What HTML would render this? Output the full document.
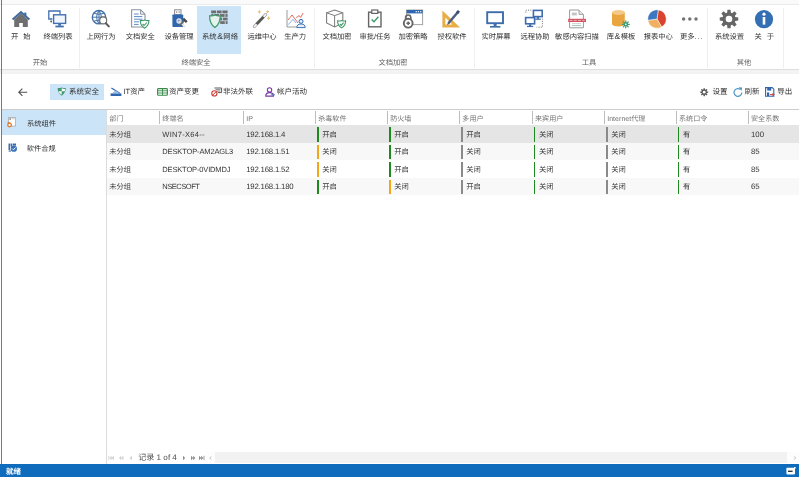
<!DOCTYPE html>
<html lang="zh-CN"><head><meta charset="utf-8"><title>系统安全</title>
<style>
html,body{margin:0;padding:0;}
body{width:799px;height:477px;overflow:hidden;background:#fff;position:relative;font-family:"Liberation Sans", sans-serif;font-size:8px;color:#3a3a3a;text-rendering:geometricPrecision;}
.a{position:absolute;white-space:nowrap;}
.c{position:absolute;white-space:nowrap;text-align:center;}
svg{position:absolute;display:block;overflow:visible;}
.rl{font-size:7.3px;line-height:10px;color:#303030;word-spacing:3px;}.amp{padding:0 0.5px;font-size:8.6px;line-height:1px;}
.gl{font-size:7.3px;line-height:10px;color:#606060;}
.tb{font-size:7.5px;line-height:10px;color:#303030;}
.th{font-size:7.1px;line-height:10px;color:#747474;}
.td{font-size:7.3px;line-height:10px;color:#363636;}
.bar{position:absolute;width:2px;}
#w{position:absolute;left:0;top:0;width:799px;height:477px;overflow:hidden;will-change:transform;}
</style></head><body><div id="w">
<div class="a" style="left:0;top:0;width:799px;height:69px;background:#fff;border-top:4px solid #fafafa;box-sizing:border-box;"></div>
<div class="a" style="left:0;top:4px;width:799px;height:1px;background:#ebebeb;"></div>
<div class="a" style="left:197px;top:6px;width:44px;height:48px;background:#cce4f7;"></div>
<div class="a" style="left:10.7px;top:10.8px;width:20px;height:18px;"><svg width="20" height="18" viewBox="0 0 20 18"><path d="M3.2 8.6 L10 2.6 L16.8 8.6 V16 H11.8 V12 H8.2 V16 H3.2 Z" fill="#6f6f6f"/><path d="M1.6 8.6 L10 1.2 L18.4 8.6" fill="none" stroke="#426a9c" stroke-width="2"/><rect x="13.2" y="1.6" width="2.2" height="3.8" fill="#426a9c"/></svg></div>
<div class="c rl" style="left:-9.3px;top:32px;width:60px;">开 始</div>
<div class="a" style="left:47px;top:10px;width:20px;height:18px;"><svg width="20" height="18" viewBox="0 0 20 18"><path d="M5.4 9 H1.8 V1 H13 V4" fill="none" stroke="#4270b0" stroke-width="1.3"/><rect x="6.6" y="4.8" width="12" height="8.6" fill="#f1f6fc" stroke="#4270b0" stroke-width="1.4"/><rect x="11.2" y="13.8" width="2.8" height="2" fill="#4270b0"/><rect x="8.4" y="15.6" width="8.4" height="1.8" fill="#4270b0"/><rect x="3.4" y="10.6" width="1.5" height="1.7" fill="#444"/></svg></div>
<div class="c rl" style="left:28px;top:32px;width:60px;">终端列表</div>
<div class="a" style="left:90.7px;top:9px;width:20px;height:20px;"><svg width="20" height="20" viewBox="0 0 20 20"><circle cx="8" cy="8.2" r="6.7" fill="#fff" stroke="#4573a8" stroke-width="1.4"/><path d="M8 1.5 V14.9 M1.3 8.2 H14.7 M2.8 4.3 Q8 6.3 13.2 4.3 M2.8 12.1 Q8 10.1 13.2 12.1 M8 1.5 Q3.2 8.2 8 14.9 M8 1.5 Q12.8 8.2 8 14.9" fill="none" stroke="#4573a8" stroke-width="1"/><circle cx="12.2" cy="11.4" r="3.5" fill="#fff" stroke="#6a6a6a" stroke-width="1.1"/><path d="M14.8 14.2 L17.8 17.4" stroke="#5a5a5a" stroke-width="2" stroke-linecap="round"/></svg></div>
<div class="c rl" style="left:71px;top:32px;width:60px;">上网行为</div>
<div class="a" style="left:130.3px;top:9px;width:20px;height:20px;"><svg width="20" height="20" viewBox="0 0 20 20"><path d="M1.6 0.8 H10.6 L15 5.2 V18 H1.6 Z" fill="#fff" stroke="#8a949e" stroke-width="1.1"/><path d="M10.6 0.8 V5.2 H15" fill="none" stroke="#8a949e" stroke-width="1"/><path d="M4 5 H8.6 M4 7.6 H12.4 M4 10.2 H12.4 M4 12.8 H9 M4 15.4 H8.6" stroke="#5b8ac6" stroke-width="1"/><path d="M14.6 11 Q16.6 11.9 18.9 11.6 Q19 16.6 14.6 19.2 Q10.2 16.6 10.3 11.6 Q12.6 11.9 14.6 11 Z" fill="#fff" stroke="#3f9a6a" stroke-width="1.1"/><path d="M12.6 15 L14.1 16.5 L16.8 13.5" fill="none" stroke="#3f9a6a" stroke-width="1.1"/></svg></div>
<div class="c rl" style="left:110.3px;top:32px;width:60px;">文档安全</div>
<div class="a" style="left:170.2px;top:9px;width:20px;height:20px;"><svg width="20" height="20" viewBox="0 0 20 20"><rect x="4.6" y="0.8" width="6.4" height="4.8" fill="#fff" stroke="#8a8a8a" stroke-width="1"/><rect x="6" y="2.4" width="1.2" height="1.4" fill="#8a8a8a"/><rect x="8.6" y="2.4" width="1.2" height="1.4" fill="#8a8a8a"/><rect x="2.4" y="5.4" width="10.8" height="12.6" rx="0.8" fill="#2f66b0"/><path d="M9 12.2 L14.6 17.6" stroke="#e4e4e4" stroke-width="1.7" stroke-linecap="round"/><circle cx="9" cy="12" r="2" fill="none" stroke="#e4e4e4" stroke-width="1.3"/><path d="M8.6 17.4 L14.6 11.4" stroke="#666" stroke-width="1.5"/><path d="M13.2 9.6 L16.8 13.2" stroke="#4a4a4a" stroke-width="2.4"/></svg></div>
<div class="c rl" style="left:149px;top:32px;width:60px;">设备管理</div>
<div class="a" style="left:209.3px;top:9px;width:20px;height:20px;"><svg width="20" height="20" viewBox="0 0 20 20"><g fill="#6e6e6e"><rect x="2.2" y="1.50" width="4.8" height="2.8"/><rect x="7.8" y="1.50" width="4.8" height="2.8"/><rect x="13.4" y="1.50" width="5.2" height="2.8"/><rect x="2.2" y="5.05" width="2.2" height="2.8"/><rect x="5.2" y="5.05" width="4.8" height="2.8"/><rect x="10.8" y="5.05" width="4.8" height="2.8"/><rect x="16.4" y="5.05" width="2.2" height="2.8"/><rect x="10.6" y="8.60" width="2.4" height="2.8"/><rect x="13.8" y="8.60" width="4.8" height="2.8"/><rect x="11.2" y="12.15" width="4.6" height="2.8"/><rect x="16.6" y="12.15" width="2.0" height="2.8"/></g><path d="M5.9 6 Q8.2 7.2 11.2 6.8 Q11.4 14.6 5.9 18.6 Q0.4 14.6 0.6 6.8 Q3.6 7.2 5.9 6 Z" fill="#e6f2ec" stroke="#3f9a6a" stroke-width="1.2"/></svg></div>
<div class="c rl" style="left:190px;top:32px;width:60px;">系统<span class="amp">&amp;</span>网络</div>
<div class="a" style="left:252px;top:9px;width:20px;height:20px;"><svg width="20" height="20" viewBox="0 0 20 20"><path d="M2.4 17.6 L13.6 5.6" stroke="#8a8a8a" stroke-width="3" stroke-linecap="round"/><path d="M2.4 17.6 L13.6 5.6" stroke="#f4f4f4" stroke-width="1.9" stroke-linecap="round"/><path d="M4.6 15.2 L11.6 7.8" stroke="#555" stroke-width="2.6"/><g stroke="#e8b868" stroke-width="0.9" stroke-linecap="round"><path d="M7.4 1.6 V4.2 M6.1 2.9 H8.7"/><path d="M15.6 1.6 V3.6 M14.6 2.6 H16.6"/><path d="M16.6 8 V10.4 M15.4 9.2 H17.8"/></g></svg></div>
<div class="c rl" style="left:232px;top:32px;width:60px;">运维中心</div>
<div class="a" style="left:284.5px;top:9px;width:22px;height:20px;"><svg width="22" height="20" viewBox="0 0 22 20"><path d="M2 1 V18 H12.6" fill="none" stroke="#8e8e8e" stroke-width="0.9"/><path d="M3 11 L7 6 L13 14" fill="none" stroke="#dc5a4e" stroke-width="0.9"/><path d="M11.2 8.6 L14.2 6.6 L15.6 8.4 L18.2 4" fill="none" stroke="#dc5a4e" stroke-width="0.9"/><path d="M3 15.8 L8 10.4 L11 14" fill="none" stroke="#6aa0d8" stroke-width="0.8"/><circle cx="16" cy="12.4" r="2" fill="#e6eff9" stroke="#2f66b0" stroke-width="1"/><path d="M11.8 18.6 Q11.8 15 16 15 Q20.2 15 20.2 18.6 Z" fill="#e6eff9" stroke="#3c74b8" stroke-width="1"/></svg></div>
<div class="c rl" style="left:265.2px;top:32px;width:60px;">生产力</div>
<div class="a" style="left:326px;top:9px;width:22px;height:20px;"><svg width="22" height="20" viewBox="0 0 22 20"><path d="M8.6 1 L16.8 3.8 V14 L8.6 18 L0.6 14 V3.8 Z" fill="#fff" stroke="#7d7d7d" stroke-width="1.1"/><path d="M0.6 3.8 L8.6 6.6 L16.8 3.8 M8.6 6.6 V18" fill="none" stroke="#7d7d7d" stroke-width="1"/><path d="M15.6 11.4 Q17.4 12.2 19.6 11.9 Q19.7 16.4 15.6 18.9 Q11.5 16.4 11.6 11.9 Q13.8 12.2 15.6 11.4 Z" fill="#fff" stroke="#3f9a6a" stroke-width="1.1"/><path d="M13.8 15 L15.2 16.4 L17.6 13.7" fill="none" stroke="#3f9a6a" stroke-width="1.1"/></svg></div>
<div class="c rl" style="left:307px;top:32px;width:60px;">文档加密</div>
<div class="a" style="left:366px;top:9px;width:18px;height:20px;"><svg width="18" height="20" viewBox="0 0 18 20"><rect x="2.6" y="3.2" width="12.4" height="14.6" fill="#fff" stroke="#646464" stroke-width="1.4"/><rect x="5.8" y="1" width="6" height="3.4" fill="#fff" stroke="#646464" stroke-width="1.2"/><path d="M5.6 10.4 L8 12.8 L12.4 7.8" fill="none" stroke="#3f9a6a" stroke-width="1.4"/></svg></div>
<div class="c rl" style="left:345px;top:32px;width:60px;">审批/任务</div>
<div class="a" style="left:402px;top:9px;width:22px;height:20px;"><svg width="22" height="20" viewBox="0 0 22 20"><rect x="4.6" y="1" width="16" height="14.6" fill="#fff" stroke="#a4a4a4" stroke-width="1"/><rect x="4.6" y="1" width="16" height="3.4" fill="#2f66b0"/><g fill="#fff"><rect x="13.6" y="2.2" width="1.3" height="1.1"/><rect x="15.8" y="2.2" width="1.3" height="1.1"/><rect x="18" y="2.2" width="1.3" height="1.1"/></g><path d="M3.6 11 V8.6 a2.6 2.6 0 0 1 5.2 0 V11" fill="none" stroke="#666" stroke-width="1.6"/><circle cx="6.2" cy="14.2" r="4.4" fill="#fff" stroke="#666" stroke-width="1.9"/><path d="M6.2 12.4 V16 M4.4 14.2 H8" stroke="#666" stroke-width="1.5"/></svg></div>
<div class="c rl" style="left:383px;top:32px;width:60px;">加密策略</div>
<div class="a" style="left:441px;top:9px;width:20px;height:20px;"><svg width="20" height="20" viewBox="0 0 20 20"><path d="M1.4 1.6 L19 18.4 H1.4 Z" fill="#e8ae48"/><path d="M4.4 8.6 L11.2 15.4 H4.4 Z" fill="#fff"/><path d="M7.4 14.2 L17 3" stroke="#4a5f86" stroke-width="2.5"/><path d="M16 4.2 L18 1.8" stroke="#3b4a66" stroke-width="2.7"/><path d="M6 16 L7 13.4 L8.6 14.8 Z" fill="#555"/></svg></div>
<div class="c rl" style="left:422px;top:32px;width:60px;">授权软件</div>
<div class="a" style="left:486px;top:9px;width:20px;height:20px;"><svg width="20" height="20" viewBox="0 0 20 20"><rect x="1.2" y="3.2" width="15.8" height="11" fill="#fff" stroke="#3f6cab" stroke-width="1.9"/><rect x="7.6" y="15" width="3" height="2.2" fill="#3f6cab"/><rect x="4" y="17" width="10.4" height="1.6" fill="#3f6cab"/></svg></div>
<div class="c rl" style="left:466px;top:32px;width:60px;">实时屏幕</div>
<div class="a" style="left:523.2px;top:9px;width:22px;height:20px;"><svg width="22" height="20" viewBox="0 0 22 20"><path d="M2.8 3.6 V1.2 H8.6" fill="none" stroke="#666" stroke-width="0.9" stroke-dasharray="1 1.3"/><path d="M19.4 9.6 V18.2 H13.6" fill="none" stroke="#666" stroke-width="0.9" stroke-dasharray="1 1.3"/><rect x="10.4" y="1.4" width="8.8" height="6.2" fill="#fff" stroke="#3f6cab" stroke-width="1.6"/><rect x="13.8" y="8" width="2.2" height="1.8" fill="#3f6cab"/><rect x="12.2" y="9.6" width="5.6" height="1.2" fill="#3f6cab"/><rect x="2.6" y="8.6" width="9" height="6.2" fill="#fff" stroke="#3f6cab" stroke-width="1.6"/><rect x="6" y="15.2" width="2.2" height="1.8" fill="#3f6cab"/><rect x="4" y="16.8" width="6.2" height="1.3" fill="#3f6cab"/></svg></div>
<div class="c rl" style="left:505px;top:32px;width:60px;">远程协助</div>
<div class="a" style="left:566px;top:9px;width:22px;height:20px;"><svg width="22" height="20" viewBox="0 0 22 20"><path d="M3.6 1 H13 L17.4 5.4 V18.8 H3.6 Z" fill="#fff" stroke="#9a9a9a" stroke-width="1"/><path d="M13 1 V5.4 H17.4" fill="#ececec" stroke="#9a9a9a" stroke-width="0.9"/><rect x="5.8" y="3.6" width="5" height="2.8" fill="#c4c4c4"/><path d="M6 14.6 H15.2" stroke="#c8c8c8" stroke-width="0.9"/><path d="M6 16.6 H15.2" stroke="#9ccbb0" stroke-width="1"/><rect x="2.2" y="9.8" width="17.8" height="3.2" fill="#d4525e"/><path d="M3.6 11.4 H18.6" stroke="#f6d4d8" stroke-width="0.7" stroke-dasharray="3 1.2"/></svg></div>
<div class="c rl" style="left:547px;top:32px;width:60px;">敏感内容扫描</div>
<div class="a" style="left:611px;top:9px;width:20px;height:20px;"><svg width="20" height="20" viewBox="0 0 20 20"><path d="M1 3.6 V15 a6.4 2.5 0 0 0 12.8 0 V3.6 Z" fill="#e9a640"/><ellipse cx="7.4" cy="3.6" rx="6.4" ry="2.5" fill="#f3c985"/><g stroke="#3a9a70" stroke-width="1.2" stroke-linecap="round"><path d="M14.8 11.8 V18.8 M11.3 15.3 H18.3 M12.3 12.8 L17.3 17.8 M17.3 12.8 L12.3 17.8"/></g><circle cx="14.8" cy="15.3" r="2" fill="#3a9a70"/><circle cx="14.8" cy="15.3" r="0.9" fill="#fff"/></svg></div>
<div class="c rl" style="left:591px;top:32px;width:60px;">库<span class="amp">&amp;</span>模板</div>
<div class="a" style="left:647.1px;top:9px;width:20px;height:20px;"><svg width="20" height="20" viewBox="0 0 20 20"><path d="M10 10 L11.28 0.89 A9.2 9.2 0 0 1 14.60 17.97 Z" fill="#d8442e" stroke="#fff" stroke-width="0.5"/><path d="M10 10 L14.60 17.97 A9.2 9.2 0 0 1 0.89 11.28 Z" fill="#f0b060" stroke="#fff" stroke-width="0.5"/><path d="M10 10 L0.89 11.28 A9.2 9.2 0 0 1 11.28 0.89 Z" fill="#3b78c0" stroke="#fff" stroke-width="0.5"/></svg></div>
<div class="c rl" style="left:628.3px;top:32px;width:60px;">报表中心</div>
<div class="a" style="left:680.2px;top:15px;width:20px;height:8px;"><svg width="20" height="8" viewBox="0 0 20 8"><circle cx="3.6" cy="4" r="1.75" fill="#747474"/><circle cx="9.8" cy="4" r="1.75" fill="#747474"/><circle cx="16" cy="4" r="1.75" fill="#747474"/></svg></div>
<div class="c rl" style="left:661.5px;top:32px;width:60px;">更多<span style="letter-spacing:0.8px">...</span></div>
<div class="a" style="left:718.5px;top:9px;width:20px;height:20px;"><svg width="20" height="20" viewBox="0 0 20 20"><path d="M19.27 8.46 L19.27 11.54 L16.32 11.91 L15.82 13.12 L17.65 15.47 L15.47 17.65 L13.12 15.82 L11.91 16.32 L11.54 19.27 L8.46 19.27 L8.09 16.32 L6.88 15.82 L4.53 17.65 L2.35 15.47 L4.18 13.12 L3.68 11.91 L0.73 11.54 L0.73 8.46 L3.68 8.09 L4.18 6.88 L2.35 4.53 L4.53 2.35 L6.88 4.18 L8.09 3.68 L8.46 0.73 L11.54 0.73 L11.91 3.68 L13.12 4.18 L15.47 2.35 L17.65 4.53 L15.82 6.88 L16.32 8.09 Z" fill="#666"/><circle cx="10" cy="10" r="3.3" fill="#fff"/></svg></div>
<div class="c rl" style="left:699.5px;top:32px;width:60px;">系统设置</div>
<div class="a" style="left:753.9px;top:9px;width:20px;height:20px;"><svg width="20" height="20" viewBox="0 0 20 20"><circle cx="10" cy="10.2" r="9.1" fill="#336fb3"/><rect x="8.7" y="8" width="2.6" height="7.6" fill="#fff"/><circle cx="10" cy="5.2" r="1.6" fill="#fff"/></svg></div>
<div class="c rl" style="left:734.2px;top:32px;width:60px;">关 于</div>
<div class="a" style="left:78.5px;top:8px;width:1px;height:60px;background:#efefef;"></div>
<div class="a" style="left:314px;top:8px;width:1px;height:60px;background:#efefef;"></div>
<div class="a" style="left:473.5px;top:8px;width:1px;height:60px;background:#efefef;"></div>
<div class="a" style="left:706.6px;top:8px;width:1px;height:60px;background:#efefef;"></div>
<div class="a" style="left:783px;top:8px;width:1px;height:60px;background:#efefef;"></div>
<div class="c gl" style="left:10px;top:57.5px;width:60px;">开始</div>
<div class="c gl" style="left:166px;top:57.5px;width:60px;">终端安全</div>
<div class="c gl" style="left:363px;top:57.5px;width:60px;">文档加密</div>
<div class="c gl" style="left:559px;top:57.5px;width:60px;">工具</div>
<div class="c gl" style="left:714px;top:57.5px;width:60px;">其他</div>
<div class="a" style="left:0;top:69px;width:799px;height:5px;background:#f3f3f3;"></div>
<div class="a" style="left:0;top:69px;width:799px;height:1px;background:#dedede;"></div>
<div class="a" style="left:18.2px;top:87.6px;width:9.4px;height:8.4px;"><svg width="9.4" height="8.4" viewBox="0 0 9.4 8.4"><path d="M9.2 4.2 H1.2 M4.4 0.6 L0.8 4.2 L4.4 7.8" fill="none" stroke="#505050" stroke-width="1.1"/></svg></div>
<div class="a" style="left:50px;top:84px;width:53.8px;height:15.5px;background:#cce4f7;"></div>
<div class="a" style="left:56.6px;top:87.3px;width:9px;height:11px;"><svg width="9.4" height="9" viewBox="0 0 10 10"><path d="M5 0.5 Q7 1.4 9.5 1.2 Q9.7 6.6 5 9.6 Q0.3 6.6 0.5 1.2 Q3 1.4 5 0.5 Z" fill="#3f9a72"/><path d="M5 1.5 V4.8 H8.5 Q8.7 3.4 8.6 2.1 Q6.6 2.2 5 1.5 Z" fill="#fff"/><path d="M5 8.5 V4.8 H1.5 Q2.1 7 5 8.5 Z" fill="#fff"/></svg></div>
<div class="a tb" style="left:69px;top:87.2px;">系统安全</div>
<div class="a" style="left:110px;top:86.8px;width:12px;height:11px;"><svg width="12" height="10" viewBox="0 0 12 10"><path d="M1.4 1 L9.6 6" stroke="#2f66b0" stroke-width="1.2"/><path d="M0.6 6.4 H11.4 V9 H0.6 Z" fill="#2f66b0"/><path d="M2.4 6 L5.4 3.6 L9.6 6" fill="#9dbde6"/></svg></div>
<div class="a tb" style="left:123.4px;top:87.2px;">IT资产</div>
<div class="a" style="left:156.8px;top:87.6px;width:11px;height:11px;"><svg width="11" height="8" viewBox="0 0 11 8"><rect x="0.6" y="0.6" width="9.8" height="6.6" rx="0.8" fill="#fff" stroke="#3a8a4a" stroke-width="1.1"/><path d="M5.5 0.6 V7.2 M0.6 2.8 H10.4 M0.6 5 H10.4" stroke="#3a8a4a" stroke-width="0.9"/></svg></div>
<div class="a tb" style="left:169px;top:87.2px;">资产变更</div>
<div class="a" style="left:211.4px;top:87.2px;width:12px;height:11px;"><svg width="12" height="10" viewBox="0 0 12 10"><path d="M3.4 1 H10.6 V5.6 H7" fill="none" stroke="#5a5a5a" stroke-width="1"/><path d="M4.6 2.6 H9.4 M5.6 4.1 H9.4" stroke="#666" stroke-width="0.8"/><circle cx="3.4" cy="6.4" r="2.6" fill="#fff" stroke="#d0392e" stroke-width="1.1"/><path d="M1.6 8.2 L5.2 4.6" stroke="#d0392e" stroke-width="1"/></svg></div>
<div class="a tb" style="left:223px;top:87.2px;">非法外联</div>
<div class="a" style="left:265.2px;top:87px;width:10px;height:11px;"><svg width="10" height="10" viewBox="0 0 11 11"><circle cx="5" cy="3.2" r="2.4" fill="#fff" stroke="#7a3aa8" stroke-width="1.2"/><path d="M0.8 10 Q0.8 6.2 5 6.2 Q9.2 6.2 9.2 10 Z" fill="#fff" stroke="#7a3aa8" stroke-width="1.2"/><path d="M6.4 8.6 H10.4 M8.8 7.2 L10.4 8.6 L8.8 10" stroke="#3c74b8" stroke-width="0.9" fill="none"/></svg></div>
<div class="a tb" style="left:277px;top:87.2px;">帐户活动</div>
<div class="a" style="left:700.2px;top:87.5px;width:8.4px;height:11px;"><svg width="8.4" height="8.4" viewBox="0 0 20 20"><path d="M19.47 8.42 L19.47 11.58 L16.13 11.85 L15.64 13.02 L17.81 15.58 L15.58 17.81 L13.02 15.64 L11.85 16.13 L11.58 19.47 L8.42 19.47 L8.15 16.13 L6.98 15.64 L4.42 17.81 L2.19 15.58 L4.36 13.02 L3.87 11.85 L0.53 11.58 L0.53 8.42 L3.87 8.15 L4.36 6.98 L2.19 4.42 L4.42 2.19 L6.98 4.36 L8.15 3.87 L8.42 0.53 L11.58 0.53 L11.85 3.87 L13.02 4.36 L15.58 2.19 L17.81 4.42 L15.64 6.98 L16.13 8.15 Z" fill="#555"/><circle cx="10" cy="10" r="3.4" fill="#fff"/></svg></div>
<div class="a tb" style="left:712.4px;top:87.2px;">设置</div>
<div class="a" style="left:733px;top:87px;width:10px;height:11px;"><svg width="10" height="10" viewBox="0 0 10 10"><path d="M8.8 5.6 A3.9 3.9 0 1 1 7 2.2" fill="none" stroke="#4f97c4" stroke-width="1.2"/><path d="M5.6 0.3 L9.2 0.6 L8.4 4 Z" fill="#4f97c4"/></svg></div>
<div class="a tb" style="left:744.6px;top:87.2px;">刷新</div>
<div class="a" style="left:765px;top:87.2px;width:11px;height:11px;"><svg width="11" height="10" viewBox="0 0 11 10"><path d="M0.6 0.6 H7.2 L8.8 2.2 V9.2 H0.6 Z" fill="#fff" stroke="#2f66b0" stroke-width="1.1"/><rect x="2.2" y="0.8" width="4" height="2.8" fill="#2f66b0"/><rect x="2" y="5.4" width="2.2" height="3.6" fill="#2f66b0"/><path d="M5 7.6 L9 7.6 M7.6 6.2 L9 7.6 L7.6 9" stroke="#d0392e" stroke-width="1" fill="none"/></svg></div>
<div class="a tb" style="left:777.3px;top:87.2px;">导出</div>
<div class="a" style="left:2px;top:110px;width:104.6px;height:24.7px;background:#cce4f7;"></div>
<div class="a" style="left:106px;top:110px;width:1px;height:354px;background:#dcdcdc;"></div>
<div class="a" style="left:7.4px;top:116.8px;width:9px;height:11px;"><svg width="9" height="11" viewBox="0 0 9 11"><rect x="1.6" y="0.5" width="6.8" height="8.6" fill="#fff" stroke="#b0b0b0" stroke-width="0.9"/><rect x="2.4" y="1.2" width="1.6" height="1.6" fill="#888"/><rect x="5" y="1.4" width="2.6" height="0.8" fill="#bbb"/><circle cx="2.6" cy="8" r="1.8" fill="#fff" stroke="#e07a30" stroke-width="1.3"/><rect x="0.6" y="5" width="2.2" height="1.3" fill="#e07a30"/></svg></div>
<div class="a tb" style="left:27px;top:118.6px;font-size:7.25px;">系统组件</div>
<div class="a" style="left:7.8px;top:143.4px;width:9.4px;height:9px;"><svg width="9.4" height="9" viewBox="0 0 11 10.5"><rect x="0.6" y="0.6" width="1.7" height="7.6" fill="#3a68a8"/><rect x="3" y="0.6" width="1.7" height="3.6" fill="#3a68a8"/><rect x="5.4" y="0.6" width="4" height="2.4" fill="#3a68a8"/><path d="M0.8 9.4 H3.4" stroke="#3a68a8" stroke-width="1.4"/><circle cx="6.8" cy="6.6" r="3.7" fill="#3c74b8"/><path d="M5 6.6 L6.4 8 L8.8 5.2" stroke="#fff" stroke-width="1.1" fill="none"/></svg></div>
<div class="a tb" style="left:26.8px;top:143.8px;font-size:7.25px;">软件合规</div>
<div class="a" style="left:2px;top:109px;width:797px;height:1px;background:#cdcdcd;"></div>
<div class="a" style="left:107px;top:124.6px;width:692px;height:1px;background:#dcdcdc;"></div>
<div class="a th" style="left:109.2px;top:113.8px;">部门</div>
<div class="a th" style="left:162.3px;top:113.8px;">终端名</div>
<div class="a th" style="left:246.2px;top:113.8px;">IP</div>
<div class="a th" style="left:318.2px;top:113.8px;">杀毒软件</div>
<div class="a th" style="left:390.2px;top:113.8px;">防火墙</div>
<div class="a th" style="left:462.3px;top:113.8px;">多用户</div>
<div class="a th" style="left:535px;top:113.8px;">来宾用户</div>
<div class="a th" style="left:607.2px;top:113.8px;">Internet代理</div>
<div class="a th" style="left:679px;top:113.8px;">系统口令</div>
<div class="a th" style="left:751px;top:113.8px;">安全系数</div>
<div class="a" style="left:159px;top:110.8px;width:1px;height:13.4px;background:#bdbdbd;"></div>
<div class="a" style="left:242.9px;top:110.8px;width:1px;height:13.4px;background:#bdbdbd;"></div>
<div class="a" style="left:314.9px;top:110.8px;width:1px;height:13.4px;background:#bdbdbd;"></div>
<div class="a" style="left:386.9px;top:110.8px;width:1px;height:13.4px;background:#bdbdbd;"></div>
<div class="a" style="left:459px;top:110.8px;width:1px;height:13.4px;background:#bdbdbd;"></div>
<div class="a" style="left:531.7px;top:110.8px;width:1px;height:13.4px;background:#bdbdbd;"></div>
<div class="a" style="left:603.9px;top:110.8px;width:1px;height:13.4px;background:#bdbdbd;"></div>
<div class="a" style="left:675.7px;top:110.8px;width:1px;height:13.4px;background:#bdbdbd;"></div>
<div class="a" style="left:747.7px;top:110.8px;width:1px;height:13.4px;background:#bdbdbd;"></div>
<div class="a" style="left:107px;top:125.2px;width:692px;height:17.5px;background:#e5e5e5;"></div>
<div class="a td" style="left:109.2px;top:129.8px;">未分组</div>
<div class="a td" style="left:162.3px;top:129.8px;font-size:7.5px;letter-spacing:0.29px;">WIN7-X64--</div>
<div class="a td" style="left:246.2px;top:129.8px;font-size:7.8px;letter-spacing:-0.2px;">192.168.1.4</div>
<div class="bar" style="left:317.3px;top:127.1px;height:14.6px;width:1.4px;background:#1e8a1e;"></div>
<div class="a td" style="left:322.2px;top:129.8px;">开启</div>
<div class="bar" style="left:389.3px;top:127.1px;height:14.6px;width:1.4px;background:#1e8a1e;"></div>
<div class="a td" style="left:394.2px;top:129.8px;">开启</div>
<div class="bar" style="left:461.4px;top:127.1px;height:14.6px;width:1.4px;background:#8a8a8a;"></div>
<div class="a td" style="left:466.3px;top:129.8px;">开启</div>
<div class="bar" style="left:534.1px;top:127.1px;height:14.6px;width:1.4px;background:#1e8a1e;"></div>
<div class="a td" style="left:539px;top:129.8px;">关闭</div>
<div class="bar" style="left:606.3px;top:127.1px;height:14.6px;width:1.4px;background:#8a8a8a;"></div>
<div class="a td" style="left:611.2px;top:129.8px;">关闭</div>
<div class="bar" style="left:678.1px;top:127.1px;height:14.6px;width:1.4px;background:#1e8a1e;"></div>
<div class="a td" style="left:683px;top:129.8px;">有</div>
<div class="a td" style="left:751px;top:129.8px;font-size:7.8px;">100</div>
<div class="a" style="left:107px;top:142.7px;width:692px;height:17.5px;background:#f8f8f8;"></div>
<div class="a td" style="left:109.2px;top:147.3px;">未分组</div>
<div class="a td" style="left:162.3px;top:147.3px;font-size:7.5px;letter-spacing:-0.13px;">DESKTOP-AM2AGL3</div>
<div class="a td" style="left:246.2px;top:147.3px;font-size:7.8px;letter-spacing:-0.2px;">192.168.1.51</div>
<div class="bar" style="left:317.3px;top:144.6px;height:14.6px;width:1.4px;background:#f0a818;"></div>
<div class="a td" style="left:322.2px;top:147.3px;">关闭</div>
<div class="bar" style="left:389.3px;top:144.6px;height:14.6px;width:1.4px;background:#1e8a1e;"></div>
<div class="a td" style="left:394.2px;top:147.3px;">开启</div>
<div class="bar" style="left:461.4px;top:144.6px;height:14.6px;width:1.4px;background:#8a8a8a;"></div>
<div class="a td" style="left:466.3px;top:147.3px;">关闭</div>
<div class="bar" style="left:534.1px;top:144.6px;height:14.6px;width:1.4px;background:#1e8a1e;"></div>
<div class="a td" style="left:539px;top:147.3px;">关闭</div>
<div class="bar" style="left:606.3px;top:144.6px;height:14.6px;width:1.4px;background:#8a8a8a;"></div>
<div class="a td" style="left:611.2px;top:147.3px;">关闭</div>
<div class="bar" style="left:678.1px;top:144.6px;height:14.6px;width:1.4px;background:#1e8a1e;"></div>
<div class="a td" style="left:683px;top:147.3px;">有</div>
<div class="a td" style="left:751px;top:147.3px;font-size:7.8px;">85</div>
<div class="a" style="left:107px;top:160.2px;width:692px;height:17.5px;background:#ffffff;"></div>
<div class="a td" style="left:109.2px;top:164.8px;">未分组</div>
<div class="a td" style="left:162.3px;top:164.8px;font-size:7.5px;letter-spacing:-0.15px;">DESKTOP-0VIDMDJ</div>
<div class="a td" style="left:246.2px;top:164.8px;font-size:7.8px;letter-spacing:-0.2px;">192.168.1.52</div>
<div class="bar" style="left:317.3px;top:162.1px;height:14.6px;width:1.4px;background:#f0a818;"></div>
<div class="a td" style="left:322.2px;top:164.8px;">关闭</div>
<div class="bar" style="left:389.3px;top:162.1px;height:14.6px;width:1.4px;background:#1e8a1e;"></div>
<div class="a td" style="left:394.2px;top:164.8px;">开启</div>
<div class="bar" style="left:461.4px;top:162.1px;height:14.6px;width:1.4px;background:#8a8a8a;"></div>
<div class="a td" style="left:466.3px;top:164.8px;">关闭</div>
<div class="bar" style="left:534.1px;top:162.1px;height:14.6px;width:1.4px;background:#1e8a1e;"></div>
<div class="a td" style="left:539px;top:164.8px;">关闭</div>
<div class="bar" style="left:606.3px;top:162.1px;height:14.6px;width:1.4px;background:#8a8a8a;"></div>
<div class="a td" style="left:611.2px;top:164.8px;">关闭</div>
<div class="bar" style="left:678.1px;top:162.1px;height:14.6px;width:1.4px;background:#1e8a1e;"></div>
<div class="a td" style="left:683px;top:164.8px;">有</div>
<div class="a td" style="left:751px;top:164.8px;font-size:7.8px;">85</div>
<div class="a" style="left:107px;top:177.7px;width:692px;height:17.5px;background:#f8f8f8;"></div>
<div class="a td" style="left:109.2px;top:182.3px;">未分组</div>
<div class="a td" style="left:162.3px;top:182.3px;font-size:7.5px;letter-spacing:-0.46px;">NSECSOFT</div>
<div class="a td" style="left:246.2px;top:182.3px;font-size:7.8px;letter-spacing:-0.2px;">192.168.1.180</div>
<div class="bar" style="left:317.3px;top:179.6px;height:14.6px;width:1.4px;background:#1e8a1e;"></div>
<div class="a td" style="left:322.2px;top:182.3px;">开启</div>
<div class="bar" style="left:389.3px;top:179.6px;height:14.6px;width:1.4px;background:#f0a818;"></div>
<div class="a td" style="left:394.2px;top:182.3px;">关闭</div>
<div class="bar" style="left:461.4px;top:179.6px;height:14.6px;width:1.4px;background:#8a8a8a;"></div>
<div class="a td" style="left:466.3px;top:182.3px;">开启</div>
<div class="bar" style="left:534.1px;top:179.6px;height:14.6px;width:1.4px;background:#1e8a1e;"></div>
<div class="a td" style="left:539px;top:182.3px;">关闭</div>
<div class="bar" style="left:606.3px;top:179.6px;height:14.6px;width:1.4px;background:#8a8a8a;"></div>
<div class="a td" style="left:611.2px;top:182.3px;">关闭</div>
<div class="bar" style="left:678.1px;top:179.6px;height:14.6px;width:1.4px;background:#1e8a1e;"></div>
<div class="a td" style="left:683px;top:182.3px;">有</div>
<div class="a td" style="left:751px;top:182.3px;font-size:7.8px;">65</div>
<div class="a" style="left:206px;top:452.3px;width:593px;height:10.6px;background:#f2f2f2;"></div>
<div class="a" style="left:206px;top:452.3px;width:9px;height:10.6px;background:#fdfdfd;"></div>
<div class="a" style="left:787px;top:452.3px;width:12px;height:10.6px;background:#fdfdfd;"></div>
<div class="a" style="left:104px;top:452px;width:110px;height:12px;"><svg width="110" height="12" viewBox="0 0 110 12" style="left:0;top:0;"><rect x="4.4" y="3.8" width="0.8" height="4.4" fill="#cfcfcf"/><path d="M7.6 3.8 L5.4 6 L7.6 8.2 Z" fill="#cfcfcf"/><path d="M9.8 3.8 L7.6 6 L9.8 8.2 Z" fill="#cfcfcf"/><path d="M17.2 3.8 L15.0 6 L17.2 8.2 Z" fill="#cfcfcf"/><path d="M19.4 3.8 L17.2 6 L19.4 8.2 Z" fill="#cfcfcf"/><path d="M27.8 3.8 L25.6 6 L27.8 8.2 Z" fill="#cfcfcf"/><path d="M79.0 3.8 L81.2 6 L79.0 8.2 Z" fill="#8c8c8c"/><path d="M87.0 3.8 L89.2 6 L87.0 8.2 Z" fill="#8c8c8c"/><path d="M89.2 3.8 L91.4 6 L89.2 8.2 Z" fill="#8c8c8c"/><path d="M95.0 3.8 L97.2 6 L95.0 8.2 Z" fill="#8c8c8c"/><path d="M97.2 3.8 L99.4 6 L97.2 8.2 Z" fill="#8c8c8c"/><rect x="99.6" y="3.8" width="0.8" height="4.4" fill="#8c8c8c"/><path d="M107.2 4.4 L105.8 6 L107.2 7.6" fill="none" stroke="#b0b0b0" stroke-width="0.8"/></svg></div>
<div class="a" style="left:792px;top:452px;width:6px;height:12px;"><svg width="6" height="12" viewBox="0 0 6 12" style="left:0;top:0;"><path d="M2.2 4.4 L3.6 6 L2.2 7.6" fill="none" stroke="#b0b0b0" stroke-width="0.8"/></svg></div>
<div class="a" style="left:138.2px;top:452px;font-size:8.1px;line-height:12px;color:#4a4a4a;">记录 1 of 4</div>
<div class="a" style="left:0;top:464px;width:799px;height:13px;background:#0f6cbd;"></div>
<div class="a" style="left:6px;top:466.6px;font-size:7.4px;line-height:10px;color:#fff;font-weight:bold;">就绪</div>
<div class="a" style="left:786px;top:467px;width:10px;height:8px;"><svg width="10" height="8" viewBox="0 0 10 8"><rect x="0.4" y="0.8" width="8.6" height="6.6" rx="0.8" fill="#fff"/><rect x="2" y="3.6" width="4.6" height="1.4" fill="#333"/><rect x="8" y="0" width="1.6" height="1.6" fill="#fff"/></svg></div>
<div class="a" style="left:1px;top:0;width:1px;height:464px;background:#5580b0;"></div>
</div></body></html>
